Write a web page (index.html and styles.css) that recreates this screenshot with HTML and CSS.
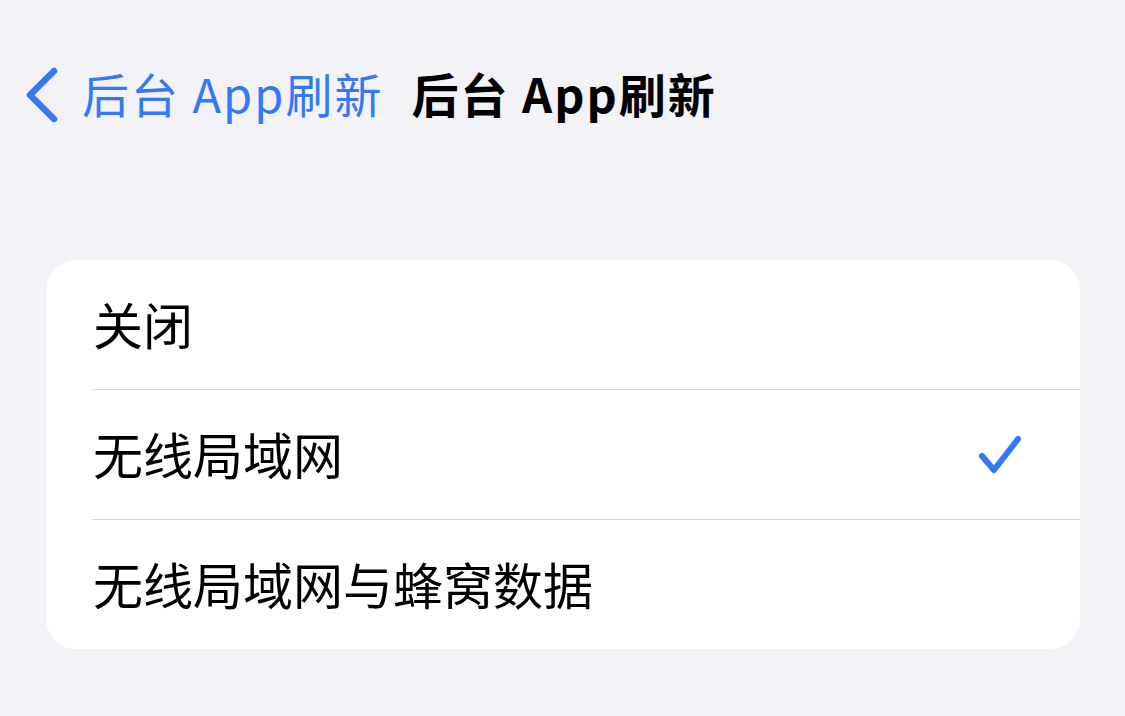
FILE: index.html
```html
<!DOCTYPE html>
<html lang="zh-CN">
<head>
  <meta charset="UTF-8" />
  <meta name="viewport" content="width=device-width, initial-scale=1.0"/>
  <title>后台 App刷新</title>
  <link rel="stylesheet" href="styles.css">
</head>
<body>
  <!-- Navigation bar -->
  <div class="nav">
    <a class="back" href="#">
      <svg class="chevron" width="36" height="56" viewBox="0 0 36 56">
        <path d="M30 4 L6 28 L30 52" fill="none" stroke="#3478f6" stroke-width="6.5" stroke-linecap="round" stroke-linejoin="round"/>
      </svg>
      <span class="back-text">后台 App刷新</span>
    </a>
    <h1 class="title">后台 App刷新</h1>
  </div>

  <!-- Options -->
  <div class="card">
    <div class="row"><span class="label">关闭</span></div>
    <div class="row"><span class="label">无线局域网</span>
      <svg class="check" width="48" height="46" viewBox="0 0 48 46">
        <path d="M6 24 L18 38 L42 7" fill="none" stroke="#3478f6" stroke-width="6" stroke-linecap="round" stroke-linejoin="round"/>
      </svg>
    </div>
    <div class="row"><span class="label">无线局域网与蜂窝数据</span></div>
  </div>
</body>
</html>
```

FILE: styles.css
```css
* {
  box-sizing: border-box;
}

body {
  margin: 0;
  font-family: "Noto Sans CJK SC", "Noto Sans", sans-serif;
  background-color: #f2f2f7;
  color: #000;
}

.nav {
  height: 190px;
  display: flex;
  align-items: center;
  padding-left: 24px;
  gap: 28px;
}

.back {
  display: flex;
  align-items: center;
  gap: 22px;
  color: #3478f6;
  text-decoration: none;
  font-size: 47px;
}

.back-text {
  margin-bottom: 6px;
  letter-spacing: 2px;
}

.title {
  margin: 0 0 6px;
  font-size: 47px;
  font-weight: 700;
  letter-spacing: 2px;
}

.card {
  margin: 70px 45px 0 46px;
  background-color: #fff;
  border-radius: 30px;
  overflow: hidden;
}

.row {
  height: 129px;
  margin-left: 46px;
  padding-left: 1px;
  padding-right: 56px;
  display: flex;
  align-items: center;
  justify-content: space-between;
  font-size: 50px;
}

.label {
  margin-bottom: 4px;
}

.row + .row {
  border-top: 1px solid #d9d9dd;
  height: 130px;
}
```
